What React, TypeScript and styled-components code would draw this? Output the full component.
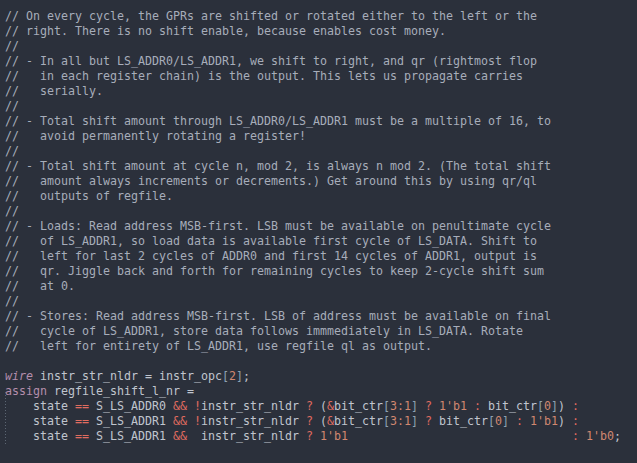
import React from "react";
import styled, { createGlobalStyle } from "styled-components";

const Global = createGlobalStyle`
  html, body { margin: 0; padding: 0; background: #2b303b; }
  body { width: 637px; height: 463px; overflow: hidden; }
`;

const Editor = styled.div`
  box-sizing: border-box;
  width: 637px;
  height: 463px;
  background: #2b303b;
  padding: 9px 0 0 5px;
  display: flex;
  flex-direction: column;
  font-family: "DejaVu Sans Mono", "Liberation Mono", monospace;
  font-size: 11.63px;
  line-height: 15px;
  color: #c0c5ce;
`;

const Line = styled.div`
  height: 15px;
  white-space: pre;
`;

const Group = styled.div`
  position: relative;
  display: flex;
  flex-direction: column;
  &::before {
    content: "";
    position: absolute;
    left: 0;
    top: -7px;
    bottom: 0;
    width: 1px;
    background: repeating-linear-gradient(
      to bottom,
      #5c6673 0px,
      #5c6673 1px,
      transparent 1px,
      transparent 3px
    );
  }
`;

type Kind = "c" | "k" | "ki" | "o" | "n" | "b" | "t";

const colors: Record<Kind, string> = {
  c: "#a7adba",
  k: "#b48ead",
  ki: "#b48ead",
  o: "#e06c60",
  n: "#d08770",
  b: "#8fa1b3",
  t: "#c0c5ce",
};

const Tok = styled.span<{ $k: Kind }>`
  color: ${(p) => colors[p.$k]};
  font-style: ${(p) => (p.$k === "ki" ? "italic" : "normal")};
`;

const comments = [
  "// On every cycle, the GPRs are shifted or rotated either to the left or the",
  "// right. There is no shift enable, because enables cost money.",
  "//",
  "// - In all but LS_ADDR0/LS_ADDR1, we shift to right, and qr (rightmost flop",
  "//   in each register chain) is the output. This lets us propagate carries",
  "//   serially.",
  "//",
  "// - Total shift amount through LS_ADDR0/LS_ADDR1 must be a multiple of 16, to",
  "//   avoid permanently rotating a register!",
  "//",
  "// - Total shift amount at cycle n, mod 2, is always n mod 2. (The total shift",
  "//   amount always increments or decrements.) Get around this by using qr/ql",
  "//   outputs of regfile.",
  "//",
  "// - Loads: Read address MSB-first. LSB must be available on penultimate cycle",
  "//   of LS_ADDR1, so load data is available first cycle of LS_DATA. Shift to",
  "//   left for last 2 cycles of ADDR0 and first 14 cycles of ADDR1, output is",
  "//   qr. Jiggle back and forth for remaining cycles to keep 2-cycle shift sum",
  "//   at 0.",
  "//",
  "// - Stores: Read address MSB-first. LSB of address must be available on final",
  "//   cycle of LS_ADDR1, store data follows immmediately in LS_DATA. Rotate",
  "//   left for entirety of LS_ADDR1, use regfile ql as output.",
];

type T = [Kind, string];

const code1: T[][] = [
  [["ki", "wire"], ["t", " instr_str_nldr = instr_opc"], ["b", "["], ["n", "2"], ["b", "]"], ["t", ";"]],
  [["k", "assign"], ["t", " regfile_shift_l_nr ="]],
];

const code2: T[][] = [
  [
    ["t", "    state "], ["o", "=="], ["t", " S_LS_ADDR0 "], ["o", "&&"], ["t", " "], ["o", "!"],
    ["t", "instr_str_nldr "], ["o", "?"], ["t", " ("], ["o", "&"], ["t", "bit_ctr"], ["b", "["],
    ["n", "3:1"], ["b", "]"], ["t", " "], ["o", "?"], ["t", " "], ["n", "1'b1"], ["t", " "], ["o", ":"],
    ["t", " bit_ctr"], ["b", "["], ["n", "0"], ["b", "]"], ["t", ") "], ["o", ":"],
  ],
  [
    ["t", "    state "], ["o", "=="], ["t", " S_LS_ADDR1 "], ["o", "&&"], ["t", " "], ["o", "!"],
    ["t", "instr_str_nldr "], ["o", "?"], ["t", " ("], ["o", "&"], ["t", "bit_ctr"], ["b", "["],
    ["n", "3:1"], ["b", "]"], ["t", " "], ["o", "?"], ["t", " bit_ctr"], ["b", "["], ["n", "0"],
    ["b", "]"], ["t", " "], ["o", ":"], ["t", " "], ["n", "1'b1"], ["t", ") "], ["o", ":"],
  ],
  [
    ["t", "    state "], ["o", "=="], ["t", " S_LS_ADDR1 "], ["o", "&&"], ["t", "  instr_str_nldr "],
    ["o", "?"], ["t", " "], ["n", "1'b1"], ["t", " ".repeat(32)], ["o", ":"], ["t", " "], ["n", "1'b0"],
    ["t", ";"],
  ],
];

const renderLine = (toks: T[], i: number) => (
  <Line key={i}>
    {toks.map(([k, s], j) => (
      <Tok key={j} $k={k}>
        {s}
      </Tok>
    ))}
  </Line>
);

export default function App() {
  return (
    <>
      <Global />
      <Editor>
        {comments.map((c, i) => (
          <Line key={i}>
            <Tok $k="c">{c}</Tok>
          </Line>
        ))}
        <Line> </Line>
        {code1.map(renderLine)}
        <Group>{code2.map(renderLine)}</Group>
      </Editor>
    </>
  );
}
